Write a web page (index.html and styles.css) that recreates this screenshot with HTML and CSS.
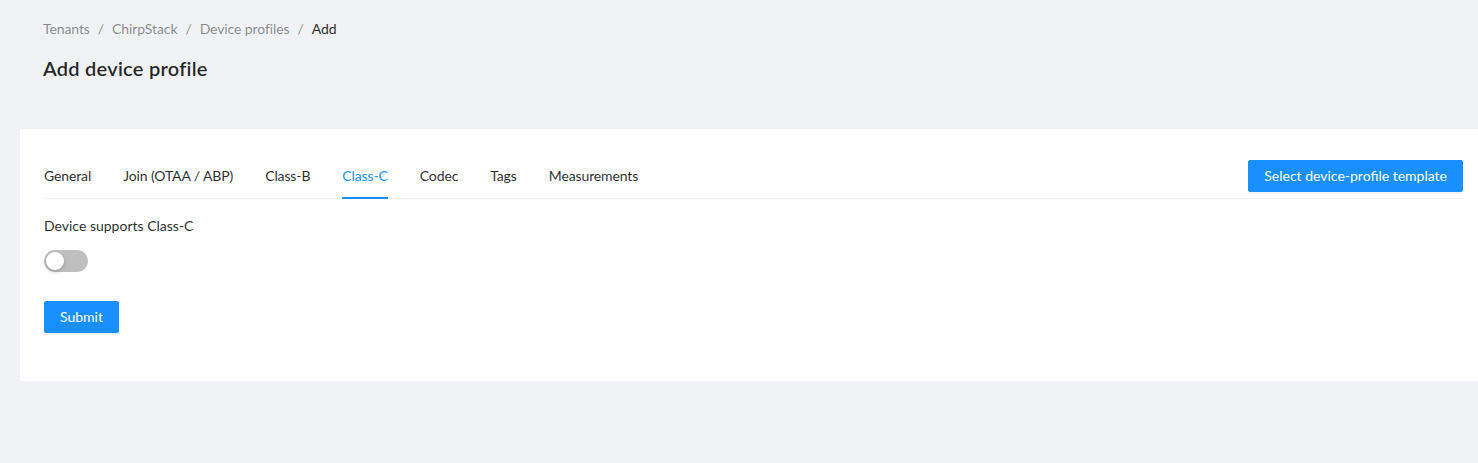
FILE: index.html
```html
<!DOCTYPE html>
<html lang="en">
<head>
<meta charset="utf-8">
<title>Add device profile</title>
<link rel="stylesheet" href="styles.css">
</head>
<body>
<div class="page">
  <header class="page-header">
    <nav class="breadcrumb">
      <span class="crumb">Tenants</span><span class="sep">/</span>
      <span class="crumb">ChirpStack</span><span class="sep">/</span>
      <span class="crumb">Device profiles</span><span class="sep">/</span>
      <span class="crumb current">Add</span>
    </nav>
    <h1 class="title">Add device profile</h1>
  </header>
  <section class="card">
    <div class="tabs-nav">
      <div class="tab-list">
        <div class="tab">General</div>
        <div class="tab">Join (OTAA / ABP)</div>
        <div class="tab">Class-B</div>
        <div class="tab active">Class-C</div>
        <div class="tab">Codec</div>
        <div class="tab">Tags</div>
        <div class="tab">Measurements</div>
      </div>
      <button class="btn btn-primary btn-template">Select device-profile template</button>
    </div>
    <form class="form">
      <div class="form-item">
        <label class="form-label">Device supports Class-C</label>
        <div class="form-control">
          <span class="switch"><span class="switch-handle"></span></span>
        </div>
      </div>
      <div class="form-item">
        <button type="button" class="btn btn-primary">Submit</button>
      </div>
    </form>
  </section>
</div>
</body>
</html>
```

FILE: styles.css
```css
html, body {
  margin: 0;
  padding: 0;
  background: #f0f2f5;
  overflow: hidden;
}
body {
  font-family: Lato, "Noto Sans", sans-serif;
  font-size: 14px;
  line-height: 22px;
  color: rgba(0, 0, 0, 0.85);
}
.page {
  width: 1487px;
}
.page-header {
  padding: 18px 0 0 43px;
  height: 111px;
  box-sizing: border-box;
}
.breadcrumb {
  display: flex;
  align-items: center;
  color: rgba(0, 0, 0, 0.45);
  height: 22px;
  letter-spacing: -0.1px;
}
.sep {
  margin: 0 8px;
}
.crumb.current {
  color: rgba(0, 0, 0, 0.85);
}
.title {
  margin: 12px 0 0;
  font-size: 20px;
  line-height: 32px;
  font-weight: 600;
  letter-spacing: 0.25px;
  color: rgba(0, 0, 0, 0.85);
}
.card {
  margin: 18px 0 0 20px;
  background: #fff;
  padding: 24px 24px 0;
  height: 252px;
  box-sizing: border-box;
}
.tabs-nav {
  display: flex;
  align-items: center;
  justify-content: space-between;
  border-bottom: 1px solid #f0f0f0;
  margin-bottom: 16px;
}
.tab-list {
  display: flex;
  gap: 32px;
  letter-spacing: -0.12px;
}
.tab {
  padding: 12px 0 11px;
  line-height: 22px;
  position: relative;
  color: rgba(0, 0, 0, 0.85);
}
.tab.active {
  color: #1890ff;
}
.tab.active::after {
  content: "";
  position: absolute;
  left: 0;
  right: 0;
  bottom: -1px;
  height: 2px;
  background: #1890ff;
}
.btn {
  font-family: inherit;
  font-size: 14px;
  line-height: 22px;
  height: 32px;
  padding: 4px 15px;
  border-radius: 2px;
  border: 1px solid #1890ff;
  cursor: pointer;
}
.btn-primary {
  background: #1890ff;
  color: #fff;
  box-shadow: 0 2px 0 rgba(0, 0, 0, 0.045);
}
.btn-template {
  margin-top: 1px;
}
.form-item {
  margin-bottom: 24px;
}
.form-label {
  display: block;
  padding-bottom: 8px;
  line-height: 22px;
}
.form-control {
  min-height: 32px;
  display: flex;
  align-items: center;
}
.switch {
  display: inline-block;
  position: relative;
  width: 44px;
  height: 22px;
  border-radius: 100px;
  background: rgba(0, 0, 0, 0.25);
}
.switch-handle {
  position: absolute;
  top: 2px;
  left: 2px;
  width: 18px;
  height: 18px;
  border-radius: 50%;
  background: #fff;
  box-shadow: 0 2px 4px rgba(0, 35, 11, 0.2);
}
```
